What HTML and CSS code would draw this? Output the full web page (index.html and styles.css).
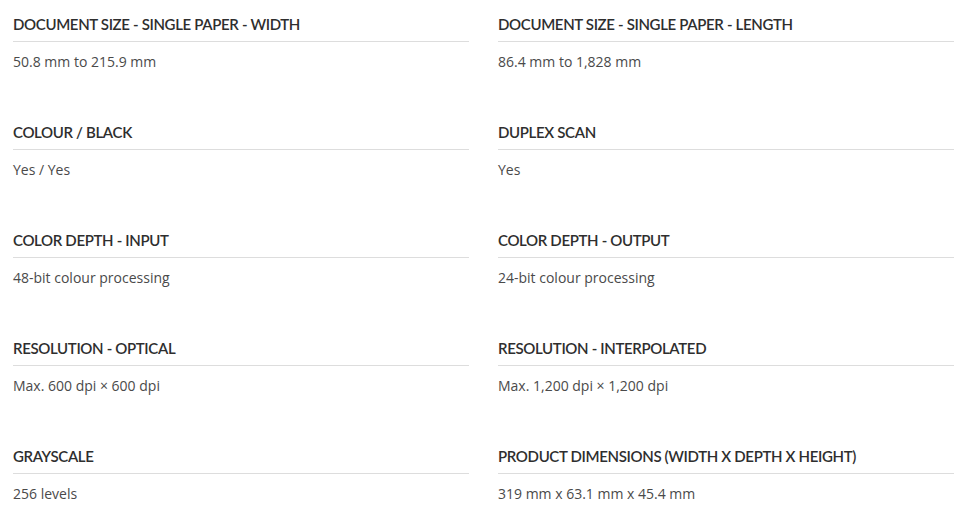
FILE: index.html
```html
<!DOCTYPE html>
<html lang="en">
<head>
<meta charset="utf-8">
<link rel="stylesheet" href="styles.css">
</head>
<body>
<div class="specs">
  <div class="spec"><h3 class="spec-title">DOCUMENT SIZE - SINGLE PAPER - WIDTH</h3><p class="spec-value">50.8 mm to 215.9 mm</p></div>
  <div class="spec"><h3 class="spec-title">DOCUMENT SIZE - SINGLE PAPER - LENGTH</h3><p class="spec-value">86.4 mm to 1,828 mm</p></div>
  <div class="spec"><h3 class="spec-title">COLOUR / BLACK</h3><p class="spec-value">Yes / Yes</p></div>
  <div class="spec"><h3 class="spec-title">DUPLEX SCAN</h3><p class="spec-value">Yes</p></div>
  <div class="spec"><h3 class="spec-title">COLOR DEPTH - INPUT</h3><p class="spec-value">48-bit colour processing</p></div>
  <div class="spec"><h3 class="spec-title">COLOR DEPTH - OUTPUT</h3><p class="spec-value">24-bit colour processing</p></div>
  <div class="spec"><h3 class="spec-title">RESOLUTION - OPTICAL</h3><p class="spec-value">Max. 600 dpi × 600 dpi</p></div>
  <div class="spec"><h3 class="spec-title">RESOLUTION - INTERPOLATED</h3><p class="spec-value">Max. 1,200 dpi × 1,200 dpi</p></div>
  <div class="spec"><h3 class="spec-title">GRAYSCALE</h3><p class="spec-value">256 levels</p></div>
  <div class="spec"><h3 class="spec-title">PRODUCT DIMENSIONS (WIDTH X DEPTH X HEIGHT)</h3><p class="spec-value">319 mm x 63.1 mm x 45.4 mm</p></div>
</div>
</body>
</html>
```
FILE: styles.css
```css
html, body {
  margin: 0;
  padding: 0;
  background: #fff;
}
.specs {
  display: grid;
  grid-template-columns: 456px 456px;
  column-gap: 29px;
  padding-left: 13px;
}
.spec {
  padding-top: 14px;
  height: 108px;
  box-sizing: border-box;
}
.spec-title {
  margin: 0;
  font-family: "Lato", sans-serif;
  font-weight: 600;
  font-size: 15px;
  line-height: 20px;
  color: #2e2e2e;
  padding-bottom: 7px;
  border-bottom: 1px solid #ddd;
  letter-spacing: -0.35px;
}
.spec-value {
  margin: 10px 0 0;
  font-family: "Open Sans", sans-serif;
  font-size: 14px;
  line-height: 20px;
  color: #4a4a4a;
}
```
